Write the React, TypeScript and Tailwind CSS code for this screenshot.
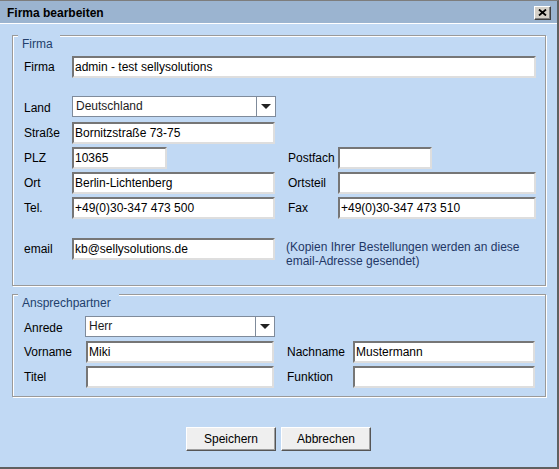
import type { ReactNode } from "react";

const inputCls =
  "h-[22px] border-2 border-t-[#767676] border-l-[#767676] border-r-[#dedede] border-b-[#dedede] bg-white px-px text-[12px] text-black outline-none";

function Field({ value = "", width }: { value?: string; width: string }) {
  return <input type="text" defaultValue={value} className={`${inputCls} ${width}`} />;
}

function Select({ value, width }: { value: string; width: string }) {
  return (
    <div className={`flex h-[21px] border border-[#7f8b9b] bg-white ${width}`}>
      <span className="flex-1 pl-[3px] leading-[19px] text-[#1c1c1c]">{value}</span>
      <span className="flex w-[19px] items-center justify-center border-l border-[#7f8b9b] bg-white">
        <svg width="10" height="5" viewBox="0 0 10 5" aria-hidden="true">
          <path d="M0 0h10L5 5z" fill="#222" />
        </svg>
      </span>
    </div>
  );
}

function Group({ title, legendPad, className, children }: { title: string; legendPad: string; className: string; children: ReactNode }) {
  return (
    <section
      className={`ml-[12px] w-[534px] border border-[#9a9a9a] shadow-[inset_1px_1px_0_#fff,1px_1px_0_#fff] ${className}`}
    >
      <div className={`-mt-px ml-[5px] w-fit bg-[#c1d9f4] pl-[4px] pt-[2px] text-[#223f6c] ${legendPad}`}>{title}</div>
      <div className="pl-[11px]">{children}</div>
    </section>
  );
}

export default function App() {
  return (
    <div className="flex h-[469px] w-[559px] flex-col border-t border-r-2 border-b-2 border-t-[#7d7d7d] border-r-[#606060] border-b-[#606060] bg-[#c1d9f4] font-['Liberation_Sans',Arial,sans-serif] text-[12px] leading-[14px] text-black">
      <header className="flex h-[23px] items-center justify-between border-b border-white bg-[#9bb4d0] pl-[7px] pr-[6px]">
        <h1 className="pt-[1px] font-bold">Firma bearbeiten</h1>
        <button
          type="button"
          aria-label="Schließen"
          className="mt-[1px] flex h-[14px] w-[17px] items-center justify-center border border-t-white border-l-white border-r-[#404040] border-b-[#404040] bg-[#d4d0c8] shadow-[inset_-1px_-1px_0_#808080]"
        >
          <svg width="9" height="7" viewBox="0 0 9 7" aria-hidden="true">
            <path d="M1 0.5l7 6M8 0.5l-7 6" stroke="#000" strokeWidth="1.8" />
          </svg>
        </button>
      </header>

      <Group title="Firma" legendPad="pr-[7px]" className="mt-[11px] h-[251px]">
        <div className="mt-[5px] flex items-center">
          <label className="w-[48px]">Firma</label>
          <Field value="admin - test sellysolutions" width="w-[464px]" />
        </div>
        <div className="mt-[18px] flex items-center">
          <label className="w-[48px] pt-[3px]">Land</label>
          <Select value="Deutschland" width="w-[204px]" />
        </div>
        <div className="mt-[5px] flex items-center">
          <label className="w-[48px]">Straße</label>
          <Field value="Bornitzstraße 73-75" width="w-[203px]" />
        </div>
        <div className="mt-[3px] flex items-center">
          <div className="flex w-[264px] items-center">
            <label className="w-[48px]">PLZ</label>
            <Field value="10365" width="w-[95px]" />
          </div>
          <label className="w-[50px]">Postfach</label>
          <Field width="w-[94px]" />
        </div>
        <div className="mt-[3px] flex items-center">
          <div className="flex w-[264px] items-center">
            <label className="w-[48px]">Ort</label>
            <Field value="Berlin-Lichtenberg" width="w-[203px]" />
          </div>
          <label className="w-[50px]">Ortsteil</label>
          <Field width="w-[198px]" />
        </div>
        <div className="mt-[3px] flex items-center">
          <div className="flex w-[264px] items-center">
            <label className="w-[48px]">Tel.</label>
            <Field value="+49(0)30-347 473 500" width="w-[203px]" />
          </div>
          <label className="w-[50px]">Fax</label>
          <Field value="+49(0)30-347 473 510" width="w-[198px]" />
        </div>
        <div className="mt-[19px] flex items-start">
          <label className="flex h-[22px] w-[48px] items-center">email</label>
          <Field value="kb@sellysolutions.de" width="w-[203px]" />
          <p className="ml-[11px] pt-[2px] leading-[14px] text-[#1f3766]">
            (Kopien Ihrer Bestellungen werden an diese
            <br />
            email-Adresse gesendet)
          </p>
        </div>
      </Group>

      <Group title="Ansprechpartner" legendPad="pr-[8px]" className="mt-[8px] h-[103px]">
        <div className="mt-[6px] flex items-center">
          <label className="w-[61px] pt-[2px]">Anrede</label>
          <Select value="Herr" width="w-[190px] h-[20px]" />
        </div>
        <div className="mt-[4px] flex items-center">
          <div className="flex w-[263px] items-center">
            <label className="w-[62px]">Vorname</label>
            <Field value="Miki" width="w-[188px]" />
          </div>
          <label className="w-[66px]">Nachname</label>
          <Field value="Mustermann" width="w-[182px]" />
        </div>
        <div className="mt-[3px] flex items-center">
          <div className="flex w-[263px] items-center">
            <label className="w-[62px]">Titel</label>
            <Field width="w-[188px]" />
          </div>
          <label className="w-[66px]">Funktion</label>
          <Field width="w-[182px]" />
        </div>
      </Group>

      <div className="mt-[30px] flex justify-center gap-[5px]">
        {["Speichern", "Abbrechen"].map((t) => (
          <button
            key={t}
            type="button"
            className="h-[24px] w-[90px] border border-t-white border-l-white border-r-[#555] border-b-[#555] bg-[#efefef] text-[12px] text-black shadow-[inset_-1px_-1px_0_#a0a0a0]"
          >
            {t}
          </button>
        ))}
      </div>
    </div>
  );
}
